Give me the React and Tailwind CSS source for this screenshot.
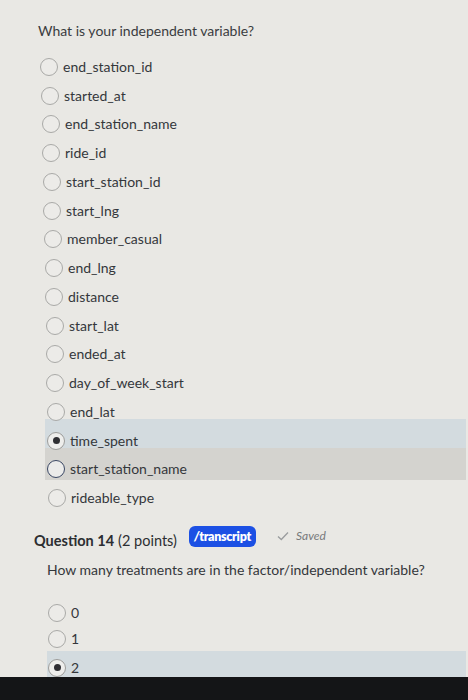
import React from "react";

function Radio({ state }) {
  if (state === "checked") {
    return (
      <span className="flex h-[18px] w-[18px] shrink-0 items-center justify-center rounded-full border border-[#9c9c9a] bg-[#eeeeec]">
        <span className="h-[7px] w-[7px] rounded-full bg-[#2f2f33]" />
      </span>
    );
  }
  if (state === "focus") {
    return (
      <span className="h-[18px] w-[18px] shrink-0 rounded-full border-[1.5px] border-[#3a4764] bg-[#ebebea]" />
    );
  }
  return (
    <span className="h-[18px] w-[18px] shrink-0 rounded-full border border-[#a9a9a7] bg-[#ecebe8]" />
  );
}

const rows = [
  { t: "end_station_id", row: "h-[28.75px] items-center", ml: "ml-[40px]" },
  { t: "started_at", row: "h-[28.75px] items-center", ml: "ml-[41px]" },
  { t: "end_station_name", row: "h-[28.75px] items-center", ml: "ml-[42px]" },
  { t: "ride_id", row: "h-[28.75px] items-center", ml: "ml-[42px]" },
  { t: "start_station_id", row: "h-[28.75px] items-center", ml: "ml-[43px]" },
  { t: "start_lng", row: "h-[28.75px] items-center", ml: "ml-[43px]" },
  { t: "member_casual", row: "h-[28.75px] items-center", ml: "ml-[44px]" },
  { t: "end_lng", row: "h-[28.75px] items-center", ml: "ml-[45px]" },
  { t: "distance", row: "h-[28.75px] items-center", ml: "ml-[45px]" },
  { t: "start_lat", row: "h-[28.75px] items-center", ml: "ml-[46px]" },
  { t: "ended_at", row: "h-[28.75px] items-center", ml: "ml-[46px]" },
  { t: "day_of_week_start", row: "h-[28.75px] items-center", ml: "ml-[46px]" },
  { t: "end_lat", row: "h-[21.4px] items-start pt-[4.4px]", ml: "ml-[47px]" },
  { t: "time_spent", row: "ml-[45px] h-[29px] items-start pt-[12px] bg-[#d3dbdf]", ml: "ml-[2px]", state: "checked" },
  { t: "start_station_name", row: "ml-[45px] h-[32px] items-start pt-[11.5px] bg-[#d4d3cf]", ml: "ml-[2px]", state: "focus" },
  { t: "rideable_type", row: "h-[28px] items-start pt-[8px]", ml: "ml-[48px]" },
];

export default function App() {
  return (
    <div
      className="relative flex h-[700px] w-[468px] flex-col overflow-hidden bg-[#e9e8e4] text-[#34373b]"
      style={{ fontFamily: "Lato, 'Open Sans', sans-serif" }}
    >
      <div className="flex h-[52.6px] items-start pl-[38px] pt-[21px] text-[14px] leading-[20px] text-[#3a3c3f]">
        What is your independent variable?
      </div>

      <div className="block pr-[2px]">
        {rows.map((r) => (
          <div key={r.t} className={`flex ${r.row}`}>
            <div className={`flex h-[20px] items-center gap-[5px] ${r.ml}`}>
              <Radio state={r.state} />
              <span className="text-[14px] leading-[20px]">{r.t}</span>
            </div>
          </div>
        ))}
      </div>

      <div className="mt-[20px] flex h-[26px] items-center pl-[34px]">
        <span className="text-[14.5px] font-bold text-[#2c2e31]">Question 14</span>
        <span className="ml-[4px] text-[14.5px] text-[#2c2e31]">(2 points)</span>
        <span className="ml-[12px] -mt-[8px] flex h-[21px] w-[67px] items-center justify-center rounded-[6px] bg-[#1c50e4] text-[12.5px] font-extrabold tracking-[-0.3px] text-white">
          <span className="italic">/</span>transcript
        </span>
        <span className="ml-[21px] -mt-[10px] flex items-center gap-[7px] text-[#8a8c8e]">
          <svg width="12" height="10" viewBox="0 0 12 10" fill="none">
            <path d="M1 5.5 L4.3 8.5 L11 1.5" stroke="#9a9c9e" strokeWidth="1.3" />
          </svg>
          <span className="text-[12px] italic text-[#77797b]">Saved</span>
        </span>
      </div>

      <div className="mt-[5px] flex h-[22px] items-center pl-[47px] text-[14px] text-[#34373b]">
        How many treatments are in the factor/independent variable?
      </div>

      <div className="mt-[18px] block pr-[2px]">
        <div className="flex h-[29px] items-center pl-[48px]">
          <div className="flex items-center gap-[5px]">
            <Radio />
            <span className="text-[14px] leading-[20px]">0</span>
          </div>
        </div>
        <div className="flex h-[23px] items-start pt-[1px] pl-[48px]">
          <div className="flex items-center gap-[5px]">
            <Radio />
            <span className="text-[14px] leading-[20px]">1</span>
          </div>
        </div>
        <div className="ml-[47px] flex h-[26px] items-start pt-[7px] pl-[1px] bg-[#d3dbdf]">
          <div className="flex items-center gap-[5px]">
            <Radio state="checked" />
            <span className="text-[14px] leading-[20px]">2</span>
          </div>
        </div>
      </div>

      <div className="flex-1 bg-[#141517]" />
    </div>
  );
}
